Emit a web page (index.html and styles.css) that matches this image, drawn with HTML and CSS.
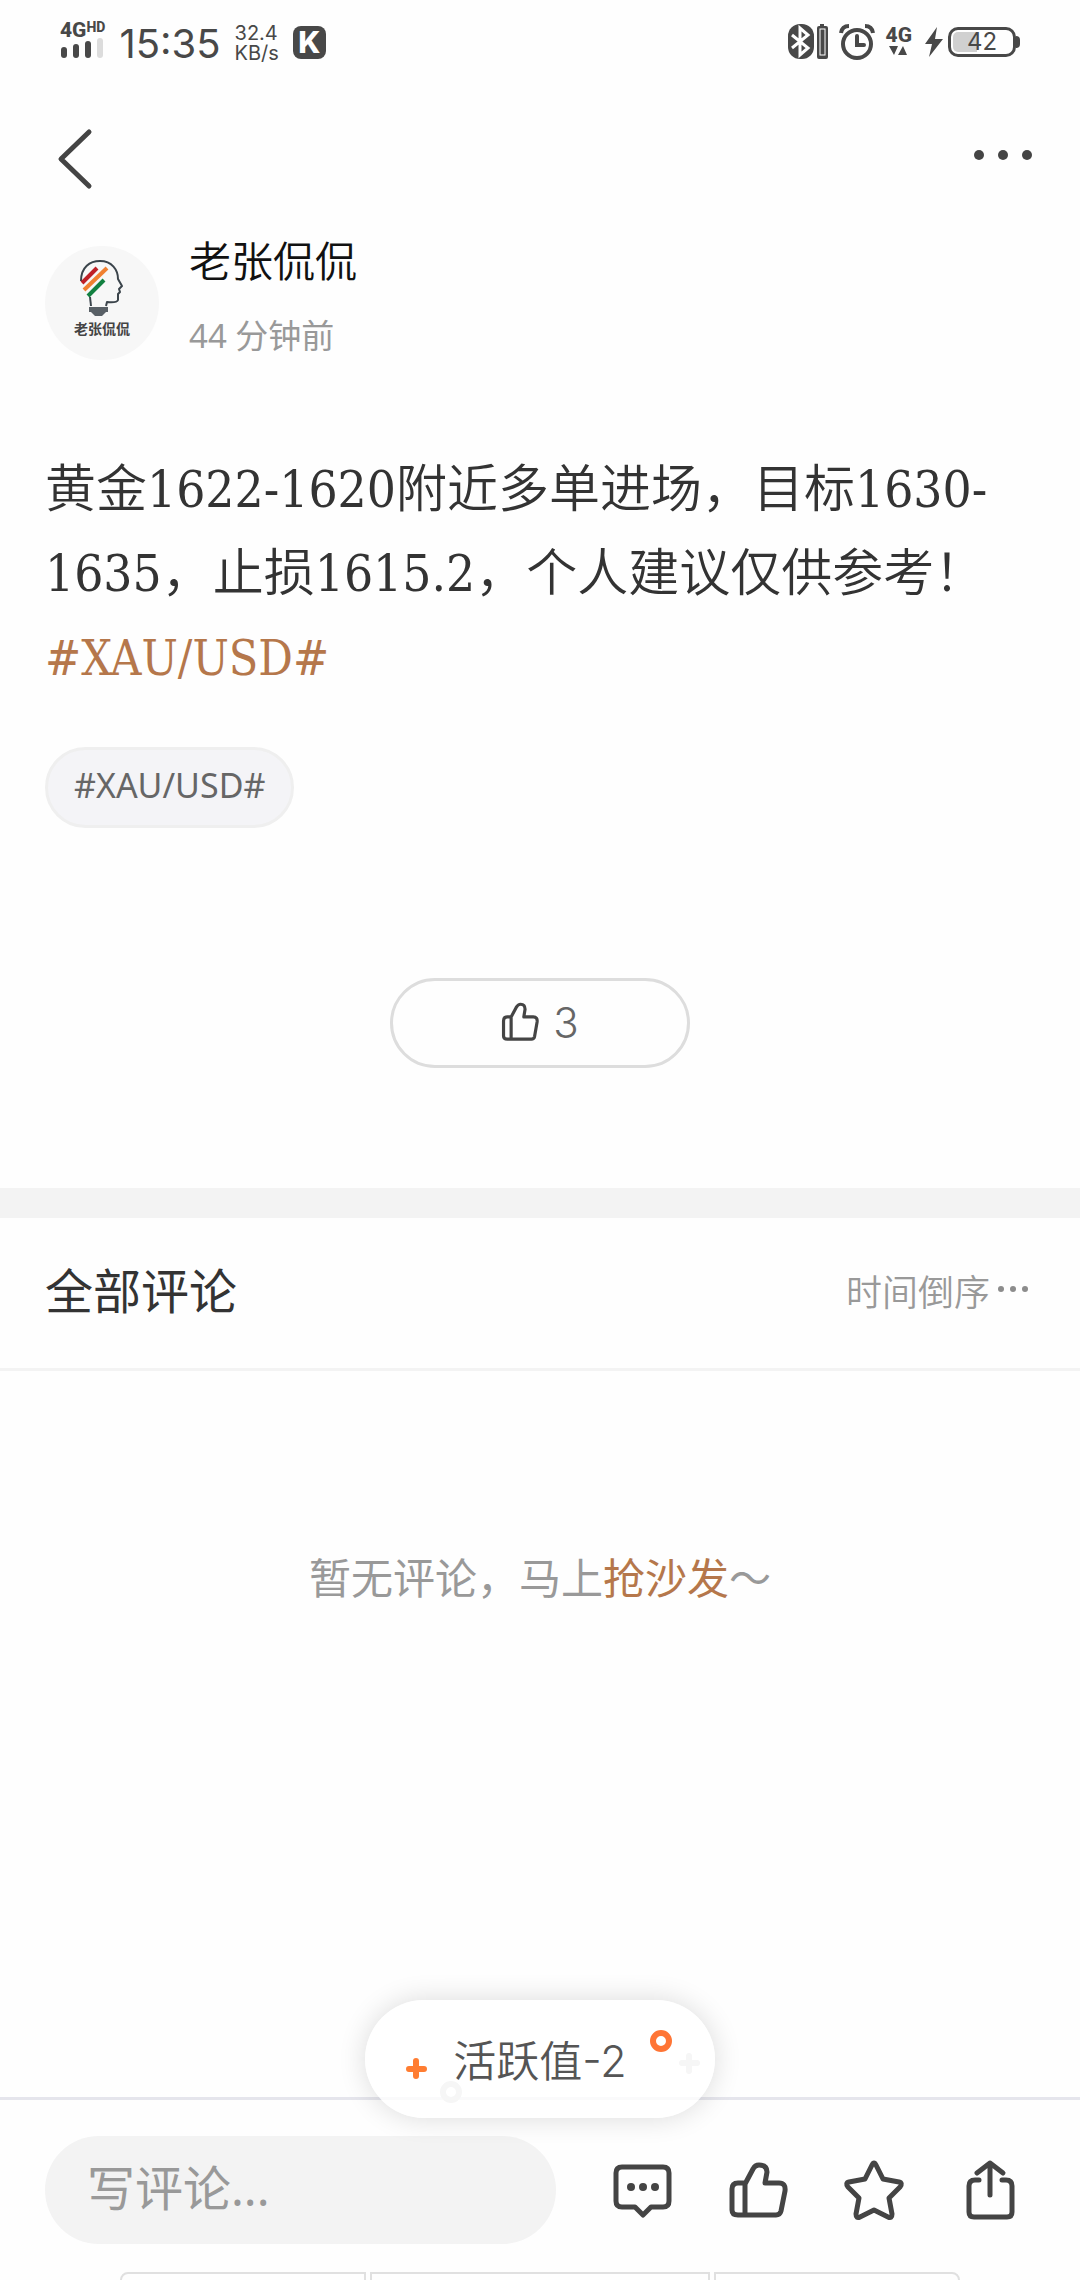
FILE: index.html
```html
<!DOCTYPE html>
<html lang="zh-CN">
<head>
    <meta charset="UTF-8">
    <meta name="viewport" content="width=device-width, initial-scale=1.0">
    <title>老张侃侃</title>
    <link rel="stylesheet" href="styles.css">
</head>
<body>

    <div class="status">
        <div class="status-group">
            <div class="signal">
                <div class="net">4G<sup>HD</sup></div>
                <svg class="signal-bars" width="44" height="20" viewBox="0 0 44 20">
                    <g fill="#484848">
                        <rect x="1" y="9" width="6" height="11" rx="3"/>
                        <rect x="13" y="6" width="6" height="14" rx="3"/>
                        <rect x="25" y="3" width="6" height="17" rx="3"/>
                    </g>
                    <rect x="37" y="0" width="6" height="20" rx="3" fill="#dcdcdc"/>
                </svg>
            </div>
            <span class="clock">15:35</span>
            <div class="speed"><span>32.4</span><span>KB/s</span></div>
            <span class="app">K</span>
        </div>
        <div class="status-group status-right">
            <svg width="40" height="36" viewBox="0 0 40 36">
                <rect x="0" y="0" width="26" height="35" rx="12" fill="#484848"/>
                <path d="M4 11 L20 24 L12 31 V4 L20 11 L4 24" fill="none" stroke="#fff" stroke-width="3"/>
                <path d="M32 0h4v2h2q2 0 2 2v29q0 2-2 2h-7q-2 0-2-2V4q0-2 2-2h1z" fill="#484848"/>
                <rect x="32" y="5" width="5" height="26" fill="none" stroke="#fff" stroke-width="1"/>
            </svg>
            <svg width="34" height="36" viewBox="0 0 34 36">
                <circle cx="17" cy="20" r="14" fill="none" stroke="#484848" stroke-width="4"/>
                <path d="M17 12v9h7" fill="none" stroke="#484848" stroke-width="4" stroke-linecap="round"/>
                <path d="M1 9Q2 2 9 2M33 9Q32 2 25 2" fill="none" stroke="#484848" stroke-width="4"/>
            </svg>
            <div class="signal">
                <div class="net">4G</div>
                <svg width="24" height="14" viewBox="0 0 24 14">
                    <path d="M3 3h9l-4 9zM12 12h9l-4-9z" fill="#484848"/>
                </svg>
            </div>
            <div class="power">
                <svg width="20" height="32" viewBox="0 0 20 32">
                    <path d="M13 1L1 18h7L5 31 19 13h-8z" fill="#484848"/>
                </svg>
                <div class="battery"><span>42</span></div>
            </div>
        </div>
    </div>

    <header class="nav">
        <button class="icon-btn" aria-label="返回">
            <svg width="48" height="64" viewBox="0 0 48 64" fill="none" stroke="#444" stroke-width="5" stroke-linecap="round" stroke-linejoin="round">
                <path d="M38 6L10 33l28 27"/>
            </svg>
        </button>
        <button class="icon-btn" aria-label="更多">
            <svg width="60" height="64" viewBox="0 0 60 64" fill="#444">
                <circle cx="4" cy="29" r="5"/>
                <circle cx="28" cy="29" r="5"/>
                <circle cx="52" cy="29" r="5"/>
            </svg>
        </button>
    </header>

    <main>
        <div class="author">
            <svg class="avatar" viewBox="0 0 114 114">
                <g fill="none" stroke="#3b444b" stroke-width="2" stroke-linejoin="round">
                    <path d="M36 35C36 21 45 15 55 15C67 15 73 24 73 33L77 40L74 43L75 46L73 48L73 54Q72 57 62 56L61 60"/>
                    <path d="M45 51L46 60"/>
                </g>
                <g fill="none" stroke-width="4">
                    <path d="M37 37L52 22" stroke="#bf2026"/>
                    <path d="M39 44L62 22" stroke="#f08030"/>
                    <path d="M43 50L59 34" stroke="#128040"/>
                </g>
                <path d="M44 61h19v5h-2l-4 4h-7l-4-4h-2z" fill="#596066"/>
                <text x="57" y="88" text-anchor="middle" class="avatar-text">老张侃侃</text>
            </svg>
            <div class="author-info">
                <div class="name">老张侃侃</div>
                <div class="time">44 分钟前</div>
            </div>
        </div>

        <p class="post">黄金1622-1620附近多单进场，目标1630-1635，止损1615.2，个人建议仅供参考！<br><a href="#" class="topic">#XAU/USD#</a></p>

        <a href="#" class="tag">#XAU/USD#</a>

        <button class="like">
            <svg width="38" height="38" viewBox="0 0 60 60" class="line-icon">
                <path d="M16 22H10q-6 0-6 6v24q0 5 6 5h38q4 0 5-4l4-23q1-8-6-8H36l2-12q0-8-7-8-4 0-7 5l-8 15v36"/>
            </svg>
            <span>3</span>
        </button>
    </main>

    <section class="comments">
        <div class="comments-head">
            <h2>全部评论</h2>
            <button class="sort">时间倒序
                <svg width="32" height="36" viewBox="0 0 32 36" fill="#8c8c8c">
                    <circle cx="4" cy="17" r="3"/>
                    <circle cx="16" cy="17" r="3"/>
                    <circle cx="28" cy="17" r="3"/>
                </svg>
            </button>
        </div>
        <p class="empty">暂无评论，马上<a href="#">抢沙发</a>～</p>
    </section>

    <footer class="bar">
        <div class="toast">
            <span>活跃值-2</span>
            <svg class="toast-deco" viewBox="0 0 350 118" fill="none" stroke-width="6" stroke-linecap="round">
                <path d="M51 61v15M44 69h15" stroke="#ff7d32"/>
                <circle cx="296" cy="41" r="8" stroke="#ff7535"/>
                <circle cx="86" cy="92" r="8" stroke="#f6f6f6"/>
                <path d="M324 56v15M317 63h15" stroke="#f6f6f6"/>
            </svg>
        </div>
        <div class="bar-row">
            <input type="text" class="comment-input" placeholder="写评论..." aria-label="写评论">
            <button class="icon-btn" aria-label="评论">
                <svg width="60" height="60" viewBox="0 0 60 60" class="bar-icon">
                    <path d="M10 7h41q6 0 6 6v28q0 6-6 6H39l-8 8-8-8H10q-6 0-6-6V13q0-6 6-6z"/>
                    <g class="dots"><circle cx="19" cy="27" r="4"/><circle cx="31" cy="27" r="4"/><circle cx="43" cy="27" r="4"/></g>
                </svg>
            </button>
            <button class="icon-btn" aria-label="点赞">
                <svg width="60" height="60" viewBox="0 0 60 60" class="bar-icon">
                    <path d="M17 23H10q-6 0-6 6v21q0 5 6 5h38q4 0 5-4l4-20q1-8-6-8H37l2-11q0-7-8-7-4 0-6 4l-8 15v31"/>
                </svg>
            </button>
            <button class="icon-btn" aria-label="收藏">
                <svg width="60" height="60" viewBox="0 0 60 60" class="bar-icon">
                    <path d="M28 5Q30 1 32 5L39 19L55 22Q59 23 56 27L45 38L48 54Q48 59 44 57L30 50L16 57Q12 59 12 54L15 38L4 27Q1 23 5 22L21 19Z"/>
                </svg>
            </button>
            <button class="icon-btn" aria-label="分享">
                <svg width="60" height="60" viewBox="0 0 60 60" class="bar-icon">
                    <path d="M19 20h-4q-6 0-6 6v26q0 5 5 5h33q5 0 5-5V26q0-6-6-6h-4M30 35V3M17 13L30 3l13 10"/>
                </svg>
            </button>
        </div>
        <div class="peek">
            <div></div>
            <div></div>
            <div></div>
        </div>
    </footer>

</body>
</html>
```
FILE: styles.css
```css
* {
    box-sizing: border-box;
}
body {
    margin: 0;
    min-height: 100vh;
    display: flex;
    flex-direction: column;
    background-color: #fefefe;
    color: #333;
    font-family: "Noto Sans", "Noto Sans CJK SC", sans-serif;
    font-weight: 350;
}
button {
    border: none;
    background: none;
    padding: 0;
    font-family: inherit;
    font-weight: inherit;
    cursor: pointer;
}
a {
    color: #b5774b;
    text-decoration: none;
}
svg {
    display: block;
    overflow: visible;
}

/* status bar */
.status {
    display: flex;
    justify-content: space-between;
    height: 84px;
    padding: 0 64px 0 60px;
    color: #484848;
    font-family: Inter, sans-serif;
    font-weight: 400;
}
.status-group {
    display: flex;
    align-items: center;
    gap: 14px;
}
.status-right {
    gap: 12px;
}
.net {
    font-size: 21px;
    font-weight: 800;
    line-height: 16px;
    font-family: Roboto, sans-serif;
}
.net sup {
    font-size: 14px;
    line-height: 0;
    vertical-align: 5px;
}
.signal-bars {
    margin-bottom: 5px;
}
.clock {
    font-size: 40px;
    line-height: 48px;
    padding-top: 4px;
}
.speed {
    display: flex;
    flex-direction: column;
    font-size: 20px;
    line-height: 20px;
    padding-top: 2px;
}
.app {
    width: 33px;
    height: 33px;
    border-radius: 8px;
    background-color: #484848;
    color: #fff;
    font-size: 30px;
    font-weight: 800;
    line-height: 33px;
    text-align: center;
}
.power {
    display: flex;
    align-items: center;
    gap: 4px;
}
.battery {
    position: relative;
    width: 68px;
    height: 30px;
    border: 3px solid #484848;
    border-radius: 10px;
    background: linear-gradient(to right, #d0d0d0 42%, transparent 42%) content-box;
    padding: 2px;
    font-size: 24px;
    line-height: 20px;
    text-align: center;
}
.battery::after {
    content: "";
    position: absolute;
    right: -7px;
    top: 6px;
    width: 4px;
    height: 12px;
    border-radius: 0 4px 4px 0;
    background-color: #484848;
}

/* top navigation */
.nav {
    display: flex;
    justify-content: space-between;
    align-items: center;
    height: 147px;
    padding: 0 45px 0 51px;
}

/* post */
main {
    padding: 0 45px 120px;
}
.author {
    display: flex;
    align-items: flex-end;
    gap: 30px;
}
.avatar {
    width: 114px;
    height: 114px;
    border-radius: 50%;
    background-color: #f7f7f7;
}
.avatar-text {
    font-size: 14px;
    font-weight: bold;
    fill: #444;
}
.name {
    font-size: 42px;
    line-height: 60px;
    color: #111;
}
.time {
    margin-top: 21px;
    font-size: 33px;
    font-weight: 400;
    line-height: 48px;
    color: #999;
}
.post {
    margin: 88px 0 47px;
    font-family: "DejaVu Serif Condensed", "Liberation Serif", "Noto Sans CJK SC", serif;
    font-size: 51px;
    line-height: 84px;
}
.topic {
    font-size: 48px;
}
.tag {
    display: block;
    width: fit-content;
    padding: 0 26px 4px;
    border: 3px solid #efefef;
    border-radius: 41px;
    background-color: #f4f4f7;
    color: #666;
    font-size: 34px;
    font-weight: 400;
    line-height: 71px;
}
.like {
    display: flex;
    justify-content: center;
    align-items: center;
    gap: 14px;
    width: 300px;
    height: 90px;
    margin: 150px auto 0;
    padding-bottom: 2px;
    border: 3px solid #ddd;
    border-radius: 45px;
    color: #666;
    font-family: Inter, sans-serif;
    font-size: 42px;
    font-weight: 300;
}
.line-icon {
    fill: none;
    stroke: #444;
    stroke-width: 5;
    stroke-linejoin: round;
}

/* comments */
.comments {
    border-top: 30px solid #f3f3f3;
}
.comments-head {
    display: flex;
    justify-content: space-between;
    align-items: center;
    height: 153px;
    padding: 0 51px 6px 45px;
    border-bottom: 3px solid #f3f3f3;
}
h2 {
    margin: 0;
    padding-bottom: 4px;
    font-size: 48px;
    font-weight: 400;
}
.sort {
    display: flex;
    align-items: center;
    gap: 7px;
    font-size: 36px;
    color: #999;
}
.empty {
    margin: 177px 0;
    font-size: 42px;
    font-weight: 400;
    line-height: 60px;
    text-align: center;
    color: #999;
}

/* bottom bar */
.bar {
    position: relative;
    margin-top: auto;
    border-top: 3px solid #e5e5ec;
}
.bar-row {
    display: flex;
    align-items: center;
    gap: 56px;
    padding: 36px 60px 28px 45px;
}
.comment-input {
    flex: 1;
    min-width: 0;
    height: 108px;
    padding: 0 42px 6px;
    border: none;
    border-radius: 54px;
    background-color: #f3f3f3;
    color: #333;
    font-family: inherit;
    font-size: 48px;
    font-weight: 400;
}
.comment-input::placeholder {
    color: #999;
}
.bar-icon {
    fill: none;
    stroke: #444;
    stroke-width: 5;
    stroke-linecap: round;
    stroke-linejoin: round;
}
.dots {
    fill: #444;
    stroke: none;
}
.toast {
    position: absolute;
    left: 50%;
    top: -100px;
    width: 350px;
    height: 118px;
    margin-left: -175px;
    padding-top: 2px;
    border-radius: 59px;
    background-color: rgba(255, 255, 255, 0.8);
    box-shadow: 0 0 28px rgba(0, 0, 0, 0.14);
    color: #555;
    font-family: Inter, "Noto Sans CJK SC", sans-serif;
    font-size: 43px;
    line-height: 118px;
    text-align: center;
}
.toast-deco {
    position: absolute;
    left: 0;
    top: 0;
    width: 350px;
    height: 118px;
}
.peek {
    display: grid;
    grid-template-columns: 246fr 340fr 246fr;
    gap: 4px;
    height: 8px;
    padding: 0 120px;
    overflow: hidden;
}
.peek div {
    height: 40px;
    border: 2px solid #e0e0e0;
}
.peek div:first-child {
    border-radius: 8px 0 0 8px;
}
.peek div:last-child {
    border-radius: 0 8px 8px 0;
}
```
